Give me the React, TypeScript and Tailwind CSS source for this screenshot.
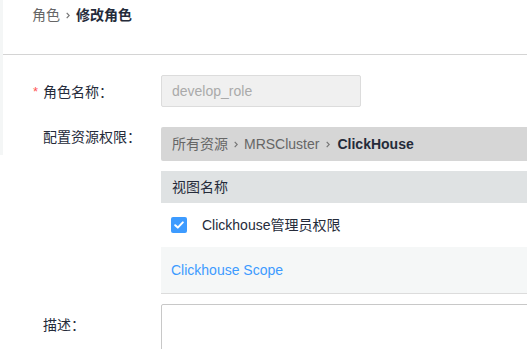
import React from 'react';

const font = { fontFamily: '"Liberation Sans", "Noto Sans CJK SC", Arial, sans-serif' };

const Chevron = ({ className = '' }: { className?: string }) => (
  <svg width="4" height="7" viewBox="0 0 4 7" fill="none" className={`shrink-0 ${className}`}>
    <path d="M0.7 0.8 L3.2 3.5 L0.7 6.2" stroke="#777" strokeWidth="1.2" />
  </svg>
);

const Label = ({ text, required = false, className = '' }: { text: string; required?: boolean; className?: string }) => (
  <div className={`w-[158px] shrink-0 flex pl-[30px] text-[14px] text-[#252b3a] leading-[20px] ${className}`}>
    <span className="w-[10px] text-[#f55] text-[13px]">{required ? '*' : ''}</span>
    <span>{text}：</span>
  </div>
);

const App = () => {
  return (
    <div className="w-[527px] h-[349px] overflow-hidden bg-white flex items-start" style={font}>
      {/* sidebar edge */}
      <div className="w-[3px] h-[155px] shrink-0 bg-[#f4f6f6]" />

      <div className="flex flex-col shrink-0">
        {/* Breadcrumb */}
        <div className="h-[55px] shrink-0 w-[524px] border-b border-[#d4d4d4] pl-[29px] pt-[7px]">
          <div className="flex items-center h-[16px] text-[14px] leading-[16px]">
            <span className="text-[#666]">角色</span>
            <Chevron className="mx-[6px]" />
            <span className="font-bold text-[#252b3a]">修改角色</span>
          </div>
        </div>

        {/* Role name */}
        <div className="mt-[20px] flex items-center">
          <Label text="角色名称" required className="pt-[1px]" />
          <div className="w-[200px] h-[32px] rounded-[2px] border border-[#dcdcdc] bg-[#f0f0f0] pl-[10px] flex items-center text-[14px] text-[#aaa]">
            develop_role
          </div>
        </div>

        {/* Resource permissions */}
        <div className="mt-[20px] flex items-start">
          <Label text="配置资源权限" />
          <div className="w-[390px] flex flex-col">
            <div className="h-[34px] bg-[#d6d6d6] rounded-[2px] pl-[11px] flex items-center text-[14px] text-[#666]">
              <span>所有资源</span>
              <Chevron className="mx-[6px]" />
              <span>MRSCluster</span>
              <Chevron className="mx-[7px]" />
              <span className="font-bold text-[#252b3a]">ClickHouse</span>
            </div>
            <div className="mt-[10px] h-[32px] bg-[#dfe2e3] pl-[11px] flex items-center text-[14px] text-[#252b3a]">
              视图名称
            </div>
            <div className="h-[44px] pl-[10px] flex items-center gap-[15px] text-[14px] text-[#252b3a]">
              <span className="w-[16px] h-[16px] rounded-[2px] bg-[#3d9bff] flex items-center justify-center">
                <svg width="10" height="8" viewBox="0 0 10 8" fill="none">
                  <path d="M1.2 4.2 L3.8 6.6 L8.8 1.4" stroke="white" strokeWidth="2" strokeLinecap="round" strokeLinejoin="round" />
                </svg>
              </span>
              <span>Clickhouse管理员权限</span>
            </div>
            <div className="h-[47px] bg-[#f5f7f7] border-b border-[#dcdcdc] pl-[10px] flex items-center text-[14px] text-[#3d9bff]">
              Clickhouse Scope
            </div>
          </div>
        </div>

        {/* Description */}
        <div className="mt-[10px] flex items-start">
          <Label text="描述" className="pt-[11px]" />
          <div className="w-[390px] h-[80px] border border-[#c8c8c8] rounded-[2px]" />
        </div>
      </div>
    </div>
  );
};

export default App;
